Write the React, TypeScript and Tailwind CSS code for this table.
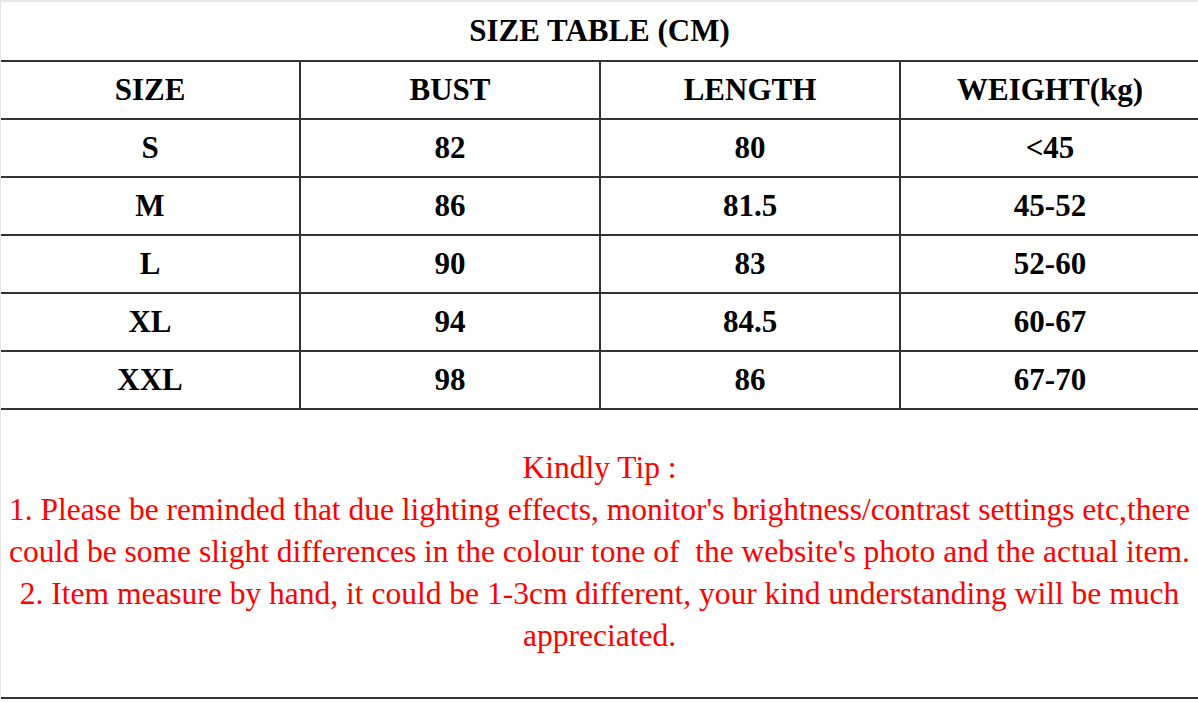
const headers = ['SIZE', 'BUST', 'LENGTH', 'WEIGHT(kg)'];

const rows = [
  ['S', '82', '80', '<45'],
  ['M', '86', '81.5', '45-52'],
  ['L', '90', '83', '52-60'],
  ['XL', '94', '84.5', '60-67'],
  ['XXL', '98', '86', '67-70'],
];

const serif = { fontFamily: '"Liberation Serif", "Times New Roman", serif' };

function Row({ cells }: { cells: string[] }) {
  return (
    <div className="grid grid-cols-[300px_300px_300px_298px] h-[58px] border-t-2 border-[#333]">
      {cells.map((c, i) => (
        <div
          key={i}
          className={`flex items-center justify-center font-bold text-[31px] text-black ${
            i < 3 ? 'border-r-2 border-[#333]' : ''
          }`}
        >
          {c}
        </div>
      ))}
    </div>
  );
}

export default function App() {
  return (
    <div className="w-[1198px] h-[702px] bg-white overflow-hidden" style={serif}>
      <div className="h-[699px] border-l border-t-2 border-[#e6e6e6] flex flex-col">
        {/* Title */}
        <div className="h-[58px] flex items-center justify-center font-bold text-[31px] text-black">
          SIZE TABLE (CM)
        </div>

        <Row cells={headers} />
        {rows.map((r) => (
          <Row key={r[0]} cells={r} />
        ))}

        {/* Tips */}
        <div className="flex-1 border-t-2 border-b-2 border-[#333] pt-[37px] text-center text-[#f00] text-[31.5px] leading-[42px]">
          <div className="whitespace-nowrap">Kindly Tip :</div>
          <div className="whitespace-nowrap">
            1. Please be reminded that due lighting effects, monitor's brightness/contrast settings etc,there
          </div>
          <div className="whitespace-nowrap">
            could be some slight differences in the colour tone of&nbsp; the website's photo and the actual item.
          </div>
          <div className="whitespace-nowrap">
            2. Item measure by hand, it could be 1-3cm different, your kind understanding will be much
          </div>
          <div className="whitespace-nowrap">appreciated.</div>
        </div>
      </div>
    </div>
  );
}
